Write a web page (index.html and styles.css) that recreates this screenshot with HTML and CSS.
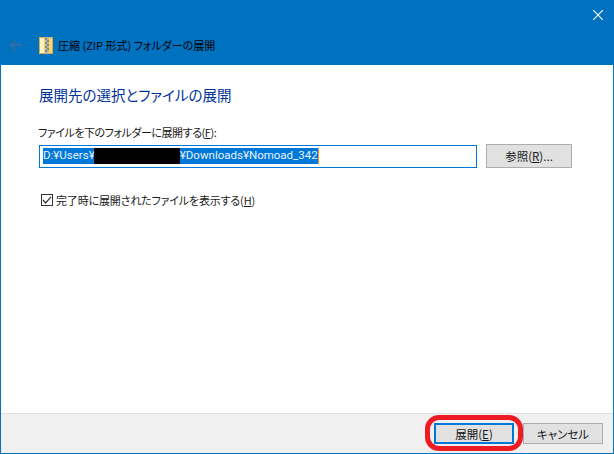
FILE: index.html
```html
<!DOCTYPE html>
<html lang="ja">
<head>
<meta charset="utf-8">
<title>圧縮 (ZIP 形式) フォルダーの展開</title>
<link rel="stylesheet" href="styles.css">
</head>
<body>
<div class="window">
  <header class="chrome">
    <div class="closebar">
      <svg class="close" width="10" height="10" viewBox="0 0 10 10"><path d="M0 0L10 10M10 0L0 10" stroke="#fff" stroke-width="1.1" fill="none"/></svg>
    </div>
    <div class="nav">
      <svg class="back" width="13" height="12" viewBox="0 0 13 12"><path d="M13 6H1.5M6.5 1L1.5 6L6.5 11" stroke="#2f6ea6" stroke-width="1.8" fill="none"/></svg>
      <svg class="zip" width="14" height="17" viewBox="0 0 14 17">
        <rect x="0.5" y="0.5" width="13" height="16" fill="#fbd568" stroke="#d8ae4a"/>
        <rect x="1" y="1" width="4" height="15" fill="#fff3c0"/>
        <rect x="6" y="0" width="4" height="17" fill="#b9b9b0"/>
        <path d="M6 2h2M8 4h2M6 6h2M8 8h2M6 10h2M8 12h2M6 14h2" stroke="#55554e" stroke-width="1"/>
      </svg>
      <span class="wintitle">圧縮 (ZIP 形式) フォルダーの展開</span>
    </div>
  </header>
  <main class="content">
    <h1 class="heading">展開先の選択とファイルの展開</h1>
    <label class="fieldlabel">ファイルを下のフォルダーに展開する(<u>F</u>):</label>
    <div class="pathrow">
      <div class="pathbox"><span class="selected">D:¥Users¥<span class="redact"></span>¥Downloads¥Nomoad_342</span><span class="caret"></span></div>
      <button class="btn browse">参照(<u>R</u>)...</button>
    </div>
    <div class="checkrow">
      <svg class="check" width="12" height="12" viewBox="0 0 12 12"><rect x="0.5" y="0.5" width="11" height="11" fill="#fff" stroke="#333"/><path d="M2 6L4.6 9L10 2.8" stroke="#333" stroke-width="1.2" fill="none"/></svg>
      <span class="checktext">完了時に展開されたファイルを表示する(<u>H</u>)</span>
    </div>
  </main>
  <footer class="footer">
    <button class="btn primary">展開(<u>E</u>)<span class="annotation"></span></button>
    <button class="btn cancel">キャンセル</button>
  </footer>
</div>
</body>
</html>
```

FILE: styles.css
```css
html, body { margin: 0; padding: 0; }
body {
  width: 614px;
  height: 454px;
  overflow: hidden;
  font-family: "Noto Sans CJK JP", "Noto Sans", sans-serif;
  font-size: 11px;
  font-feature-settings: "palt";
  color: #1a1a1a;
}
.window {
  box-sizing: border-box;
  width: 614px;
  height: 454px;
  display: flex;
  flex-direction: column;
  border: solid #0072c0;
  border-width: 0 1px 1px 1px;
  background: #fff;
}
.chrome {
  height: 65px;
  flex: none;
  margin: 0 -1px;
  background: #0072c0;
  display: flex;
  flex-direction: column;
}
.closebar {
  height: 30px;
  display: flex;
  justify-content: flex-end;
  padding: 10px 11px 0 0;
  box-sizing: border-box;
}
.nav {
  display: flex;
  align-items: center;
  height: 30px;
  padding-left: 9px;
}
.back { margin-right: 17px; }
.zip { margin-right: 5px; }
.wintitle { color: #000; line-height: 30px; }
.content {
  flex: 1;
  padding: 19px 0 0 37px;
  display: flex;
  flex-direction: column;
}
.heading {
  margin: 0 0 0 1px;
  font-size: 14.5px;
  line-height: 22px;
  font-weight: 400;
  color: #003399;
}
.fieldlabel { margin-top: 17px; line-height: 18px; letter-spacing: -0.45px; }
.pathrow {
  display: flex;
  align-items: flex-start;
  margin: 4px 0 0 1px;
}
.pathbox {
  box-sizing: border-box;
  width: 438px;
  height: 23px;
  border: 1px solid #0078d7;
  padding: 2px 0 0 3px;
  display: flex;
  font-family: "Roboto", "Noto Sans", sans-serif;
  font-size: 11.5px;
  line-height: 15px;
}
.selected {
  background: #0078d7;
  color: #e8f2fb;
  height: 16px;
  white-space: nowrap;
}
.redact {
  display: inline-block;
  width: 86px;
  height: 16px;
  margin-left: -1px;
  background: #000;
  vertical-align: top;
}
.caret { width: 1px; height: 16px; background: #ff8a28; }
.btn {
  box-sizing: border-box;
  font: inherit;
  font-size: 11.5px;
  font-feature-settings: "palt";
  color: #1a1a1a;
  background: #e1e1e1;
  border: 1px solid #adadad;
  padding: 0;
  line-height: 18px;
}
.browse {
  width: 86px;
  height: 24px;
  margin-left: 9px;
  margin-top: -1px;
}
.checkrow {
  display: flex;
  align-items: center;
  gap: 3px;
  margin: 23px 0 0 3px;
}
.checktext { line-height: 18px; letter-spacing: -0.16px; }
.footer {
  flex: none;
  box-sizing: border-box;
  height: 40px;
  background: #f0f0f0;
  border-top: 1px solid #dfdfdf;
  display: flex;
  justify-content: flex-end;
  gap: 9px;
  padding: 9px 10px 0 0;
}
.footer .btn { width: 80px; height: 21px; position: relative; }
.primary { border: 2px solid #0078d7; }
.annotation {
  position: absolute;
  left: -11px;
  top: -10px;
  width: 98px;
  height: 36px;
  border: 5px solid #ed1c24;
  border-radius: 14px;
  box-sizing: border-box;
}
```
